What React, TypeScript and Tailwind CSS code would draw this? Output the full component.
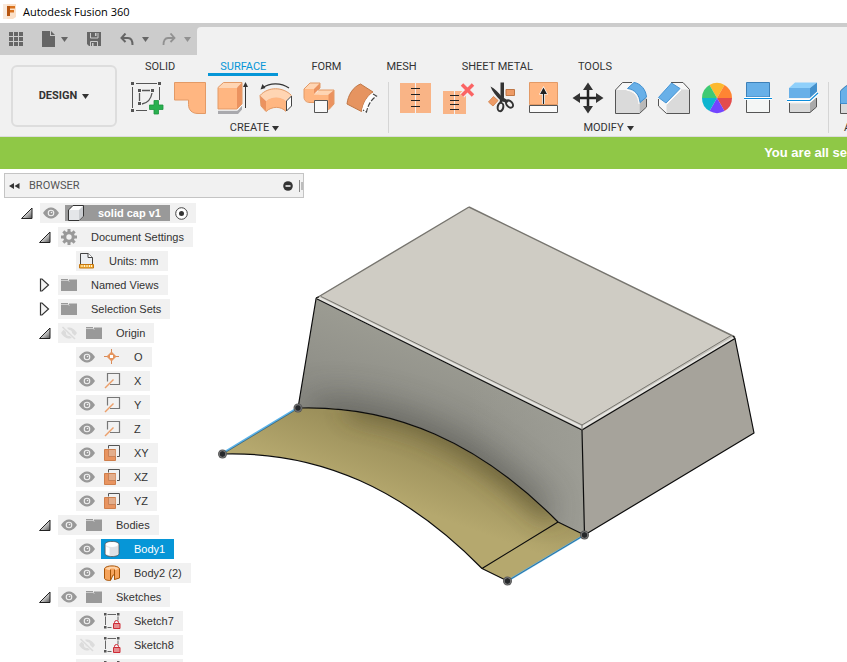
import type { ReactNode } from "react"

const Caret = ({ className = "" }: { className?: string }) => (
  <svg width="7" height="5" viewBox="0 0 7 5" className={className} aria-hidden="true">
    <path d="M0 0h7L3.5 5z" fill="currentColor" />
  </svg>
)

const Glyph = ({ children }: { children: ReactNode }) => (
  <svg width="32" height="32" viewBox="0 0 32 32" fill="none" className="block overflow-visible" aria-hidden="true">
    {children}
  </svg>
)

/* ---------- ribbon icons ---------- */

const createTools = [
  {
    name: "Create Sketch",
    icon: (
      <Glyph>
        <g stroke="#555" strokeWidth="1">
          <path d="M5 1.5h21M1.5 5v21M28.5 5v13M5 28.5h11" />
          <path d="M11 8.5h8M8.5 11v8M21 11c-1 6-4 10-10 11" strokeWidth="1.3" />
        </g>
        <path d="M0 0h3v3H0zM27 0h3v3h-3zM0 27h3v3H0zM7 7h3v3H7zM20 7h3v3h-3zM7 20h3v3H7z" fill="#555" />
        <path d="M23 18.5h4.500v4.500H32v4.500h-4.500V32H23v-4.500h-4.500V23H23z" fill="#29b04f" stroke="#1d9440" strokeWidth="0.8" />
      </Glyph>
    ),
  },
  {
    name: "Patch",
    icon: (
      <Glyph>
        <path d="M.5.5h31v31H24c-6 0-9.500-3.500-9.500-9V18H.5z" fill="#ffb681" stroke="#e39a66" />
      </Glyph>
    ),
  },
  {
    name: "Extrude",
    icon: (
      <Glyph>
        <path d="M1 28.500h19.500l4.500-5v4L21 32H1z" fill="#a9a9ad" />
        <path d="M1 28h19.500l4.500-5" stroke="#fff" />
        <path d="M1 5.500h19V27H1z" fill="#ffb681" />
        <path d="M1 5.500L6.500.5H25L20 5.500z" fill="#ffd5b3" />
        <path d="M20 5.500l5-5V22l-5 5z" fill="#eb925f" />
        <path d="M1 27V5.500L6.500.5H25V22l-5 5z" stroke="#e39a66" />
        <path d="M28.500 3v23" stroke="#333" />
        <path d="M28.500 0l2.500 5h-5z" fill="#333" />
      </Glyph>
    ),
  },
  {
    name: "Revolve",
    icon: (
      <Glyph>
        <path d="M3 5.500c7-5 18-5 26 .5" stroke="#333" strokeWidth="1.200" />
        <path d="M.5 7.500L2.500 2l3 4z" fill="#333" />
        <path d="M0 13.500C8 4.500 23 4.500 31.500 13.500L26 19c-5.500-5-14-5-20 0z" fill="#ffd5b3" />
        <path d="M0 13.500L6 19v10.500L1 24z" fill="#eb925f" />
        <path d="M6 19c6-5 14.500-5 20 0v10.500c-5-5.500-14-5.500-20 0z" fill="#ffb681" />
        <path d="M0 13.500C8 4.500 23 4.500 31.500 13.500M0 13.500L1 24l5 5.500c6-5.500 15-5.500 20 0" stroke="#e39a66" />
        <path d="M26.500 19l5-5v10l-5 5z" fill="#fff" stroke="#444" />
      </Glyph>
    ),
  },
  {
    name: "Loft",
    icon: (
      <Glyph>
        <path d="M1 6.500L7.500 1H17v5l-5 5h6l-3 3H1z" fill="#ffd5b3" />
        <path d="M1 7h10v5.500h15V28l-15-2v-6H7c-4 0-6-2-6-5z" fill="#ffb681" />
        <path d="M11 12.500L16.500 8H31l-5 4.500z" fill="#ffd5b3" />
        <path d="M11 7l6-6v5l-6 6z" fill="#eb925f" />
        <path d="M25.500 12.500L31 8v14l-5.500 6z" fill="#eb925f" />
        <path d="M1 7l6-6h10v5l-2 2h16v14l-5 5.500M1 7v8c0 4 3 5.500 6 5.500h4" stroke="#e39a66" />
        <path d="M11.500 18.500h13v12h-13z" fill="#f8f8f8" stroke="#555" />
      </Glyph>
    ),
  },
  {
    name: "Sweep",
    icon: (
      <Glyph>
        <path d="M1 22C2 13 7 5 14.500 2L27 10c-6 4-10 11-11.500 19.500z" fill="#e69460" stroke="#bf7746" />
        <path d="M26.500 12l3.500 2C25 18 22 23 20.500 30L17 28C18.500 21 21.500 15.500 26.500 12z" fill="#fff" stroke="#fff" strokeWidth="2" />
        <path d="M27 12l3.500 2C25 18 22 23 20.500 30L17 28" stroke="#444" strokeWidth="1.200" strokeDasharray="5 1.500" />
      </Glyph>
    ),
  },
]

const wheel = ["#fcb92f", "#ff8533", "#e34c4c", "#7345ff", "#0db5cf", "#3fca73"]

const modifyTools = [
  {
    name: "Stitch",
    icon: (
      <Glyph>
        <path d="M1 1h31v30H1z" fill="#f9b486" />
        <path d="M16.500 1v30" stroke="#f1f1f1" />
        <path d="M12 6.500h9M12 12.500h9M12 18.500h9M12 24.500h9" stroke="#222" />
      </Glyph>
    ),
  },
  {
    name: "Unstitch",
    icon: (
      <Glyph>
        <path d="M1 9h23v23H1z" fill="#f9b486" />
        <path d="M12.500 9v23" stroke="#f1f1f1" />
        <path d="M8 13.500h9M8 18.500h9M8 22.500h9M8 27.500h9" stroke="#222" />
        <path d="M20 2.500l11 11M31 2.500l-11 11" stroke="#f1f1f1" strokeWidth="6" />
        <path d="M20 2.500l11 11M31 2.500l-11 11" stroke="#fb6464" strokeWidth="3.500" />
      </Glyph>
    ),
  },
  {
    name: "Trim",
    icon: (
      <Glyph>
        <path d="M21 7.500h8.500v6H21z" fill="#ed9b66" stroke="#bf7746" />
        <path d="M3.500 20l5-5.500 4.500 4-5 5.500z" fill="#ed9b66" stroke="#d88a55" />
        <path d="M5.500 4.500c4 2 8 6 11 10L24 19l-2 2-6-2C11 14 7 9 5.500 4.500z" fill="#333" />
        <path d="M15.500 .5h3.500v15l-2.500 6-2-1.500 1-4z" fill="#333" />
        <ellipse cx="15.500" cy="25" rx="2.800" ry="4.200" transform="rotate(10 15.500 25)" stroke="#333" strokeWidth="2" />
        <ellipse cx="24.500" cy="22" rx="2.800" ry="4.200" transform="rotate(-42 24.500 22)" stroke="#333" strokeWidth="2" />
      </Glyph>
    ),
  },
  {
    name: "Extend",
    icon: (
      <Glyph>
        <path d="M1.500.5h28v22h-28z" fill="#ffb681" stroke="#e39a66" />
        <path d="M1.500 23.500h28v7h-28z" fill="#fafafa" stroke="#555" />
        <path d="M15.500 8v14" stroke="#fff" strokeWidth="3" />
        <path d="M15.500 4l4.500 8.500h-9z" fill="#fff" />
        <path d="M15.500 10v12" stroke="#222" strokeWidth="1.300" />
        <path d="M15.500 5.500l3.500 6.500h-7z" fill="#222" />
      </Glyph>
    ),
  },
  {
    name: "Move/Copy",
    icon: (
      <Glyph>
        <path d="M17 5v22M6 16h22" stroke="#222" strokeWidth="2.500" />
        <path d="M17 .5l5 7.500H12zM17 31.500l5-7.500H12zM1.500 16l7.500-5v10zM32.500 16L25 11v10z" fill="#333" />
      </Glyph>
    ),
  },
  {
    name: "Fillet",
    icon: (
      <Glyph>
        <path d="M1.500 8L8.500.5H20L32.500 13v12l-7 6.500h-24z" fill="#f7f7f7" />
        <path d="M1.500 8H14c7 2 11 6 11.500 13v10.500h-24z" fill="#dadada" />
        <path d="M25.500 20l7-6v11l-7 6.500z" fill="#b9b9b9" />
        <path d="M1.500 8L8.500.5H18M1.500 8v23.500h24l7-6.500V17" stroke="#555" />
        <path d="M13.500 6.500L20 .5C27 1.500 32 8 32.500 15L26 20.500C25.500 13 21 7.500 13.500 6.500z" fill="#68b0e8" stroke="#3f8fd0" />
        <path d="M12.500 8C20 9 24.500 14 25 22" stroke="#fff" />
      </Glyph>
    ),
  },
  {
    name: "Chamfer",
    icon: (
      <Glyph>
        <path d="M12.500.5H26l6.500 7v24H9.500L1.500 24v-8z" fill="#f7f7f7" />
        <path d="M9.500 22L24 7.500h8.500v24h-23z" fill="#dadada" />
        <path d="M14 .5h12l6.500 7v24h-23L1.500 24v-7" stroke="#555" />
        <path d="M1.500 15.500L14.500 1l8.500 5.500L9 21z" fill="#68b0e8" stroke="#4796d6" />
        <path d="M9.500 22.500L24 8" stroke="#fff" />
      </Glyph>
    ),
  },
  {
    name: "Appearance",
    icon: (
      <Glyph>
        {wheel.map((color, i) => (
          <path key={color} d="M17 16L9.500 3a15 15 0 0 1 15 0z" fill={color} transform={`rotate(${i * 60} 17 16)`} />
        ))}
      </Glyph>
    ),
  },
  {
    name: "Split Face",
    icon: (
      <Glyph>
        <path d="M3.500.5h23V15h-23z" fill="#68b0e8" stroke="#3d80b8" />
        <path d="M3.500 18v12.500h23V18" fill="#f4f6f5" stroke="#555" />
        <path d="M1 16.500h28" stroke="#fff" strokeWidth="3" />
        <path d="M1 16.500h28" stroke="#0c8cdb" />
      </Glyph>
    ),
  },
  {
    name: "Split Body",
    icon: (
      <Glyph>
        <path d="M3.500 21.500h20l7-6V25l-6 5.500h-21z" fill="#d8d8d8" />
        <path d="M24 21l6.500-5.500V25L24 30.500z" fill="#aaa" />
        <path d="M3.500 21v9.500H24l6.500-5.500v-9" stroke="#555" />
        <path d="M3 6h21v10H3z" fill="#68b0e8" />
        <path d="M3 6l6-5.500h22L24 6z" fill="#8fd0fb" />
        <path d="M24 6l7-5.500V10l-7 6z" fill="#4390cc" />
        <path d="M1 18.500h23L32 11" stroke="#fff" strokeWidth="3.500" />
        <path d="M1 18.500h23L32 11" stroke="#0c8cdb" strokeWidth="1.200" />
      </Glyph>
    ),
  },
]

const componentIcon = (
  <Glyph>
    <path d="M1.500 9L7 4h18v22l-6 5.500H1.500z" fill="#dadada" stroke="#555" />
    <path d="M1.500 9L7 4h18v12l-6 5.500H1.500z" fill="#68b0e8" stroke="#3f8fd0" />
  </Glyph>
)

const assembleTools = [
  { name: "New Component", icon: componentIcon },
  { name: "Joint", icon: componentIcon },
]

/* ---------- tree icons ---------- */

const Eye = () => (
  <svg width="16" height="12" viewBox="0 0 16 12" aria-hidden="true">
    <path d="M0 6C3 1.700 5.500.5 8 .5S13 1.700 16 6c-3 4.300-5.500 5.500-8 5.500S3 10.300 0 6z" fill="#999" />
    <circle cx="8" cy="6" r="3.300" fill="#f1f1f1" />
    <circle cx="8" cy="6" r="2.200" fill="#999" />
    <circle cx="8.500" cy="5.500" r=".8" fill="#f1f1f1" />
  </svg>
)

const EyeOff = () => (
  <svg width="16" height="14" viewBox="0 0 16 14" aria-hidden="true">
    <path d="M0 7c3-4.300 5.500-5.500 8-5.500S13 2.700 16 7c-3 4.300-5.500 5.500-8 5.500S3 11.300 0 7z" fill="#dcdcdc" />
    <circle cx="8" cy="7" r="3" fill="#f1f1f1" />
    <circle cx="8" cy="7" r="1.800" fill="#dcdcdc" />
    <path d="M2 .5l13 13" stroke="#f1f1f1" strokeWidth="3.500" />
    <path d="M1.500 1l12.500 12" stroke="#dcdcdc" strokeWidth="1.600" />
  </svg>
)

const Small = ({ children }: { children: ReactNode }) => (
  <svg width="16" height="16" viewBox="0 0 16 16" fill="none" className="shrink-0 overflow-visible" aria-hidden="true">
    {children}
  </svg>
)

const treeIcons: Record<string, ReactNode> = {
  component: (
    <Small>
      <path d="M.5 5L5 .5h10.500V11L11 15.500H.5z" fill="#fff" stroke="#333" strokeLinejoin="round" />
      <path d="M1 5h10v10H1z" fill="#e4e6e9" />
      <path d="M11 5l4-4v10l-4 4z" fill="#c9ccd0" />
    </Small>
  ),
  gear: (
    <Small>
      <g fill="#999">
        {[0, 45, 90, 135].map((angle) => (
          <path key={angle} d="M6.500 0h3v16h-3z" transform={`rotate(${angle} 8 8)`} />
        ))}
        <circle cx="8" cy="8" r="5.800" />
      </g>
      <circle cx="8" cy="8" r="2.700" fill="#f1f1f1" />
    </Small>
  ),
  units: (
    <Small>
      <path d="M1.500 11V.5H9l4.500 4V11" fill="#eceef1" stroke="#444" />
      <path d="M9 .5v4h4.500" fill="#fff" stroke="#444" />
      <path d="M.5 11.500h14v3.500H.5z" fill="#f5b23c" stroke="#c4760f" />
      <path d="M3 12v2M5.500 12v2M8 12v2M10.500 12v2M12.500 12v2" stroke="#fff2d0" />
    </Small>
  ),
  folder: (
    <Small>
      <path d="M0 2h7v1H0zM0 4h16v10H0zM8 2.500h8V4H8z" fill="#999" />
      <path d="M0 3.500h7l1.500 1" stroke="#ccc" />
    </Small>
  ),
  point: (
    <Small>
      <path d="M7.500 0v15M0 7.500h15" stroke="#d88a58" />
      <path d="M7.500 2.500l5 5-5 5-5-5z" fill="#e5955f" />
      <path d="M6 6h3v3H6z" fill="#fff" />
    </Small>
  ),
  axis: (
    <Small>
      <path d="M3.500 8.500V.5h12v11H6" stroke="#777" strokeWidth="1.200" />
      <path d="M1 15l8.500-8.500" stroke="#ec9f6b" strokeWidth="1.400" />
    </Small>
  ),
  plane: (
    <Small>
      <path d="M.5 4.500h11v11H.5z" fill="#e89460" stroke="#cf7f4c" />
      <path d="M5 5h6.500v6.500H5z" fill="#e3ae8c" />
      <path d="M4.500 5v6.500h7" stroke="#c98258" />
      <path d="M4.500 3.500v-3h11v11h-2.500" stroke="#555" />
    </Small>
  ),
  body: (
    <Small>
      <path d="M1 3.500C1 1.500 4 .5 8 .5s7 1 7 3v9c0 2-3 3-7 3s-7-1-7-3z" fill="#e4e5e8" stroke="#555" strokeWidth="0.800" />
      <path d="M2 5.500c3 1.500 9 1.500 12 0v7c-3 2-9 2-12 0z" fill="#dfe1e5" />
      <path d="M2 5.500c1 .6 2 1 3.500 1.200v7.500C4 14 3 13.500 2 12.700z" fill="#fff" />
      <ellipse cx="8" cy="3.500" rx="6" ry="2.400" fill="#fff" />
    </Small>
  ),
  surface: (
    <Small>
      <path d="M.5 3.500C2 0 14 0 15.500 3.500V13l-5 1.500V10H9l-2.500 5.500c-3 0-6-.5-6-2.500z" fill="#f6a45c" stroke="#a85508" />
      <path d="M1.500 3.500c2-2.200 11.500-2.200 13 0-1.500 1.500-2.500 1.500-4 1.500V3.500h-4V5c-2 0-4-.3-5-1.500z" fill="#ffd3a8" />
      <path d="M6.500 4.500v10.500M10.500 4.500v10" stroke="#a85508" />
    </Small>
  ),
  sketch: (
    <Small>
      <path d="M3.500 1.500h8.500M1.500 3.500v8.500M14 3.500v4M3.500 14.500h4" stroke="#666" />
      <path d="M0 0h2.500v2.500H0zM13 0h2.500v2.500H13zM0 13h2.500v2.500H0z" fill="#555" />
      <path d="M10.500 11V9.500a2 2 0 0 1 4 0V11" stroke="#cf2a36" />
      <path d="M9.500 10.500h6.500v5H9.500z" fill="#e58d90" stroke="#cf2a36" />
    </Small>
  ),
}

type Node = {
  label: string
  icon: string
  level: number
  toggle?: "open" | "closed"
  eye?: "on" | "off"
}

const nodes: Node[] = [
  { label: "solid cap v1", icon: "component", level: 0, toggle: "open", eye: "on" },
  { label: "Document Settings", icon: "gear", level: 1, toggle: "open" },
  { label: "Units: mm", icon: "units", level: 2 },
  { label: "Named Views", icon: "folder", level: 1, toggle: "closed" },
  { label: "Selection Sets", icon: "folder", level: 1, toggle: "closed" },
  { label: "Origin", icon: "folder", level: 1, toggle: "open", eye: "off" },
  { label: "O", icon: "point", level: 2, eye: "on" },
  { label: "X", icon: "axis", level: 2, eye: "on" },
  { label: "Y", icon: "axis", level: 2, eye: "on" },
  { label: "Z", icon: "axis", level: 2, eye: "on" },
  { label: "XY", icon: "plane", level: 2, eye: "on" },
  { label: "XZ", icon: "plane", level: 2, eye: "on" },
  { label: "YZ", icon: "plane", level: 2, eye: "on" },
  { label: "Bodies", icon: "folder", level: 1, toggle: "open", eye: "on" },
  { label: "Body1", icon: "body", level: 2, eye: "on" },
  { label: "Body2 (2)", icon: "surface", level: 2, eye: "on" },
  { label: "Sketches", icon: "folder", level: 1, toggle: "open", eye: "on" },
  { label: "Sketch7", icon: "sketch", level: 2, eye: "on" },
  { label: "Sketch8", icon: "sketch", level: 2, eye: "off" },
  { label: "Sketch9", icon: "sketch", level: 2, eye: "on" },
]

const indents = ["pl-5", "pl-[38px]", "pl-14"]

function TreeRow({ node }: { node: Node }) {
  const isRoot = node.level === 0
  const isSelected = node.label === "Body1"

  return (
    <li className={`flex items-center h-5 ${indents[node.level]}`}>
      <span className="flex items-center w-5 h-5 shrink-0">
        {node.toggle && (
          <button aria-label={`Toggle ${node.label}`}>
            <svg width="13" height="14" viewBox="0 0 13 14" className="block" aria-hidden="true">
              {node.toggle === "open" ? (
                <path d="M1.500 12.500L12 2v10.500z" fill="url(#toggle)" stroke="#222" />
              ) : (
                <path d="M2.500 1v12h1.500L10.500 7 4 1z" fill="#f4f4f4" stroke="#333" strokeWidth="1.200" />
              )}
            </svg>
          </button>
        )}
      </span>
      <div className="flex items-center h-5 bg-[#f1f1f1]">
        {node.eye && (
          <button className="flex items-center w-[25px] pl-[3px]" aria-label={`Visibility of ${node.label}`}>
            {node.eye === "on" ? <Eye /> : <EyeOff />}
          </button>
        )}
        <button
          className={`flex items-center gap-3.5 pl-[3px] pr-[9px] whitespace-nowrap ${
            isRoot
              ? "h-4 bg-[#999] text-white font-bold"
              : isSelected
                ? "h-5 bg-[#0696d7] text-white"
                : "h-5 text-[#333]"
          }`}
        >
          {treeIcons[node.icon]}
          {node.label}
        </button>
        {isRoot && (
          <label className="flex items-center pl-[5px] pr-2">
            <input type="radio" name="active" defaultChecked className="sr-only" aria-label="Activate component" />
            <svg width="13" height="13" viewBox="0 0 13 13" aria-hidden="true">
              <circle cx="6.500" cy="6.500" r="5.800" fill="#fff" stroke="#444" />
              <circle cx="6.500" cy="6.500" r="2.500" fill="#333" />
            </svg>
          </label>
        )}
      </div>
    </li>
  )
}

function Model() {
  const front = "M316 299L582 430L584.500 535L558 522C480 443 395 405 298 408z"
  const surface = "M298 408C395 405 480 443 558 522L584.500 535L507.500 581L482 568.500C404 489 319 451 222 454z"
  const points = [
    [298, 408],
    [222.500, 454],
    [584.500, 535],
    [507.500, 581],
  ]

  return (
    <svg
      viewBox="0 169 847 493"
      preserveAspectRatio="xMinYMin meet"
      className="absolute inset-0 w-full h-full"
      fill="none"
      role="img"
      aria-label="Model"
    >
      <defs>
        <linearGradient id="toggle" x1="0" y1="0" x2="1" y2="1">
          <stop offset="0.300" stopColor="#fff" />
          <stop offset="1" stopColor="#555" />
        </linearGradient>
        <linearGradient id="front" gradientUnits="userSpaceOnUse" x1="400" y1="335" x2="370" y2="415">
          <stop offset="0" stopColor="#9b9b92" />
          <stop offset="1" stopColor="#8c8c85" />
        </linearGradient>
        <linearGradient id="frontRight" gradientUnits="userSpaceOnUse" x1="470" y1="0" x2="584" y2="0">
          <stop offset="0" stopColor="#9d9d95" stopOpacity="0" />
          <stop offset="1" stopColor="#9d9d95" />
        </linearGradient>
        <linearGradient id="gold" gradientUnits="userSpaceOnUse" x1="300" y1="405" x2="280" y2="460">
          <stop offset="0" stopColor="#9c905b" />
          <stop offset="1" stopColor="#b5a86e" />
        </linearGradient>
        <filter id="soft" filterUnits="userSpaceOnUse" x="150" y="250" width="550" height="400">
          <feGaussianBlur stdDeviation="18" />
        </filter>
        <filter id="tight" filterUnits="userSpaceOnUse" x="150" y="250" width="550" height="400">
          <feGaussianBlur stdDeviation="13" />
        </filter>
        <clipPath id="frontClip">
          <path d={front} />
        </clipPath>
        <clipPath id="surfaceClip">
          <path d={surface} />
        </clipPath>
      </defs>

      {/* top face and rounded rim */}
      <path d="M469 207L735 337L582 430L316 298z" fill="#c6c4bd" />
      <path d="M469 207L731 335.500L582 424.500L321 296z" fill="#cfccc4" />
      <path d="M318 297.500L582 427.500L735 337" stroke="#e6e5e1" strokeWidth="2.200" />
      <path d="M469 207L316.500 298M469 207L735 337" stroke="#77756f" strokeWidth="1.400" />
      <path d="M321 296.500L582 425L731 335.500" stroke="#77756f" />

      {/* right face */}
      <path d="M582 430L735 338L754 433L584.500 535z" fill="#a6a39b" />

      {/* front face, darker towards the arch */}
      <path d={front} fill="url(#front)" />
      <path d={front} fill="url(#frontRight)" />
      <g clipPath="url(#frontClip)">
        <path
          d="M310 418C395 416 465 450 540 520"
          stroke="#4a4945"
          strokeWidth="36"
          filter="url(#soft)"
          opacity="0.620"
        />
      </g>

      {/* patch surface, shaded along its upper edge */}
      <path d={surface} fill="url(#gold)" />
      <g clipPath="url(#surfaceClip)">
        <path
          d="M350 403C430 413 490 450 555 513"
          stroke="#4e4528"
          strokeWidth="22"
          filter="url(#tight)"
          opacity="0.750"
        />
      </g>

      <g stroke="#0c0c0c" strokeWidth="1.200" strokeLinejoin="round">
        <path d="M298 408L316 299Q316 297 319 297M317 299L582 430L735 338.500L754 433L584.500 535L582 430" />
        <path d="M735 338.500L733 336" />
        <path d="M298 408C395 405 480 443 558 522L584.500 535" />
        <path d="M222 454C319 451 404 489 482 568.500L507.500 581M482 568.500L558 522" />
      </g>
      <path d="M582 424.500V430" stroke="#77756f" />
      <path d="M298 407.500L222 453.500M584.500 535L507.500 581" stroke="#5cb3e8" strokeWidth="2" />
      <path d="M298 408.500L222 454.500M584.500 535L507.500 581" stroke="#174768" strokeWidth="0.600" />
      {points.map(([x, y]) => (
        <g key={x}>
          <circle cx={x} cy={y} r="4.500" fill="#555" />
          <circle cx={x} cy={y} r="3.300" fill="#26282b" stroke="#8a8a8a" strokeWidth="0.800" />
        </g>
      ))}
    </svg>
  )
}

type Tool = { name: string; icon: ReactNode }

function ToolGroup({ label, tools }: { label: string; tools: Tool[] }) {
  return (
    <section className="flex flex-col items-center shrink-0">
      <div className="flex gap-[11px]">
        {tools.map((tool) => (
          <button key={tool.name} aria-label={tool.name}>
            {tool.icon}
          </button>
        ))}
      </div>
      <button className="flex items-center gap-[3px] mt-1.5 h-4">
        {label}
        <Caret />
      </button>
    </section>
  )
}

const tabs = ["SOLID", "SURFACE", "FORM", "MESH", "SHEET METAL", "TOOLS"]

export default function App() {
  return (
    <div className="flex flex-col h-screen overflow-hidden bg-white text-[#333] text-[11px] leading-4 font-['Liberation_Sans',Arial,sans-serif]">
      <header className="shrink-0">
        <div className="flex items-center gap-1.5 h-[23px] pl-[3px] text-black font-['Open_Sans',sans-serif]">
          <svg width="14" height="15" viewBox="0 0 14 15" aria-hidden="true">
            <path d="M0 0h13v13l-3 2H0z" fill="#fbe0c8" />
            <path d="M0 0h4v15H0z" fill="#f8e9dc" />
            <path d="M4 2h8v2.500H7V6h4v2.500H7V12H4z" fill="#d9721e" />
            <path d="M4 2h3v10H4z" fill="#b7550f" />
          </svg>
          <h1>Autodesk Fusion 360</h1>
        </div>

        <div className="flex bg-[#ccc]">
          <nav className="flex items-center gap-[19px] h-8 pl-[9px] pr-1.5 text-[#666]">
            <button aria-label="Data panel">
              <svg width="14" height="14" viewBox="0 0 14 14" fill="currentColor" className="block">
                <path d="M0 0h4v4H0zM5 0h4v4H5zM10 0h4v4h-4zM0 5h4v4H0zM5 5h4v4H5zM10 5h4v4h-4zM0 10h4v4H0zM5 10h4v4H5zM10 10h4v4h-4z" />
              </svg>
            </button>
            <button className="flex items-center gap-1.5" aria-label="File">
              <svg width="13" height="16" viewBox="0 0 13 16" fill="currentColor">
                <path d="M0 0h8v5h5v11H0z" />
                <path d="M9 0l4 4H9z" />
              </svg>
              <Caret />
            </button>
            <button aria-label="Save">
              <svg width="14" height="14" viewBox="0 0 14 14" className="block">
                <path d="M0 0h14v14H2l-2-2z" fill="currentColor" />
                <path d="M3.500 1v5h7.500V1M3.500 14V9.500h7V14" fill="none" stroke="#ccc" />
                <path d="M8 1h1.500v3H8zM5 11h1.500v3H5z" fill="#ccc" />
              </svg>
            </button>
            <div className="flex gap-[13px]">
              <button className="flex items-center gap-2" aria-label="Undo">
                <svg width="14" height="13" viewBox="0 0 14 13" fill="none">
                  <path d="M2 5h6c3 0 4.500 2 4.500 7" stroke="currentColor" strokeWidth="2" />
                  <path d="M5.500.5L1.500 5l4 4" stroke="currentColor" strokeWidth="2" />
                </svg>
                <Caret />
              </button>
              <button className="flex items-center gap-2 text-[#919191]" aria-label="Redo">
                <svg width="14" height="13" viewBox="0 0 14 13" fill="none">
                  <path d="M12 5H6C3 5 1.500 7 1.500 12" stroke="currentColor" strokeWidth="1.800" />
                  <path d="M8.500.5l4 4.500-4 4" stroke="currentColor" strokeWidth="1.800" />
                </svg>
                <Caret />
              </button>
            </div>
          </nav>
          <div className="flex-1 mt-1 rounded-tl bg-[#f1f1f1]" />
        </div>

        <div className="flex h-[82px] pl-[11px] bg-[#f1f1f1] border-b border-[#ddd] font-['Roboto',sans-serif]">
          <button className="flex items-center justify-center gap-[5px] w-[106px] h-[62px] mt-2.5 shrink-0 border-2 border-[#ddd] rounded-md font-bold">
            DESIGN
            <Caret />
          </button>
          <div className="flex flex-col pl-3.5">
            <div className="flex gap-[21px] h-[21px] pl-0.5">
              {tabs.map((tab) => (
                <button
                  key={tab}
                  className={`flex items-end h-[21px] px-3 border-b-3 leading-3 whitespace-nowrap ${
                    tab === "SURFACE" ? "border-[#0696d7] text-[#0696d7]" : "border-transparent"
                  }`}
                >
                  {tab}
                </button>
              ))}
            </div>
            <div className="flex gap-2.5 mt-1.5">
              <ToolGroup label="CREATE" tools={createTools} />
              <div className="w-px h-[51px] bg-[#d5d5d5]" />
              <ToolGroup label="MODIFY" tools={modifyTools} />
              <div className="w-px h-[51px] bg-[#d5d5d5]" />
              <ToolGroup label="ASSEMBLE" tools={assembleTools} />
            </div>
          </div>
        </div>

        <p className="flex items-center justify-end h-8 bg-[#8fc846] text-[13px] font-bold text-white whitespace-nowrap">
          You are all se
        </p>
      </header>

      <main className="relative flex-1 min-h-0">
        <Model />
        <aside className="relative w-[304px] pl-1 pt-1">
          <div className="flex items-center h-[25px] pl-1 bg-[#f1f1f1] border border-[#c4c4c4] text-[#555] font-['Roboto',sans-serif]">
            <button aria-label="Collapse browser">
              <svg width="11" height="6" viewBox="0 0 11 6" className="block">
                <path d="M5 0v6L0 3zM10.500 0v6L5.500 3z" fill="#333" />
              </svg>
            </button>
            <h2 className="flex-1 pl-[9px]">BROWSER</h2>
            <button aria-label="Browser options">
              <svg width="10" height="10" viewBox="0 0 10 10" className="block">
                <circle cx="5" cy="5" r="4.800" fill="#333" />
                <path d="M2.500 5h5" stroke="#fff" strokeWidth="1.500" />
              </svg>
            </button>
            <svg width="4" height="12" viewBox="0 0 4 12" className="ml-1.5" aria-hidden="true">
              <path d="M.5 0v12M3 2v8" stroke="#888" />
            </svg>
          </div>
          <ul className="flex flex-col gap-1 pt-[5px] -ml-1">
            {nodes.map((node) => (
              <TreeRow key={node.label} node={node} />
            ))}
          </ul>
        </aside>
      </main>
    </div>
  )
}
